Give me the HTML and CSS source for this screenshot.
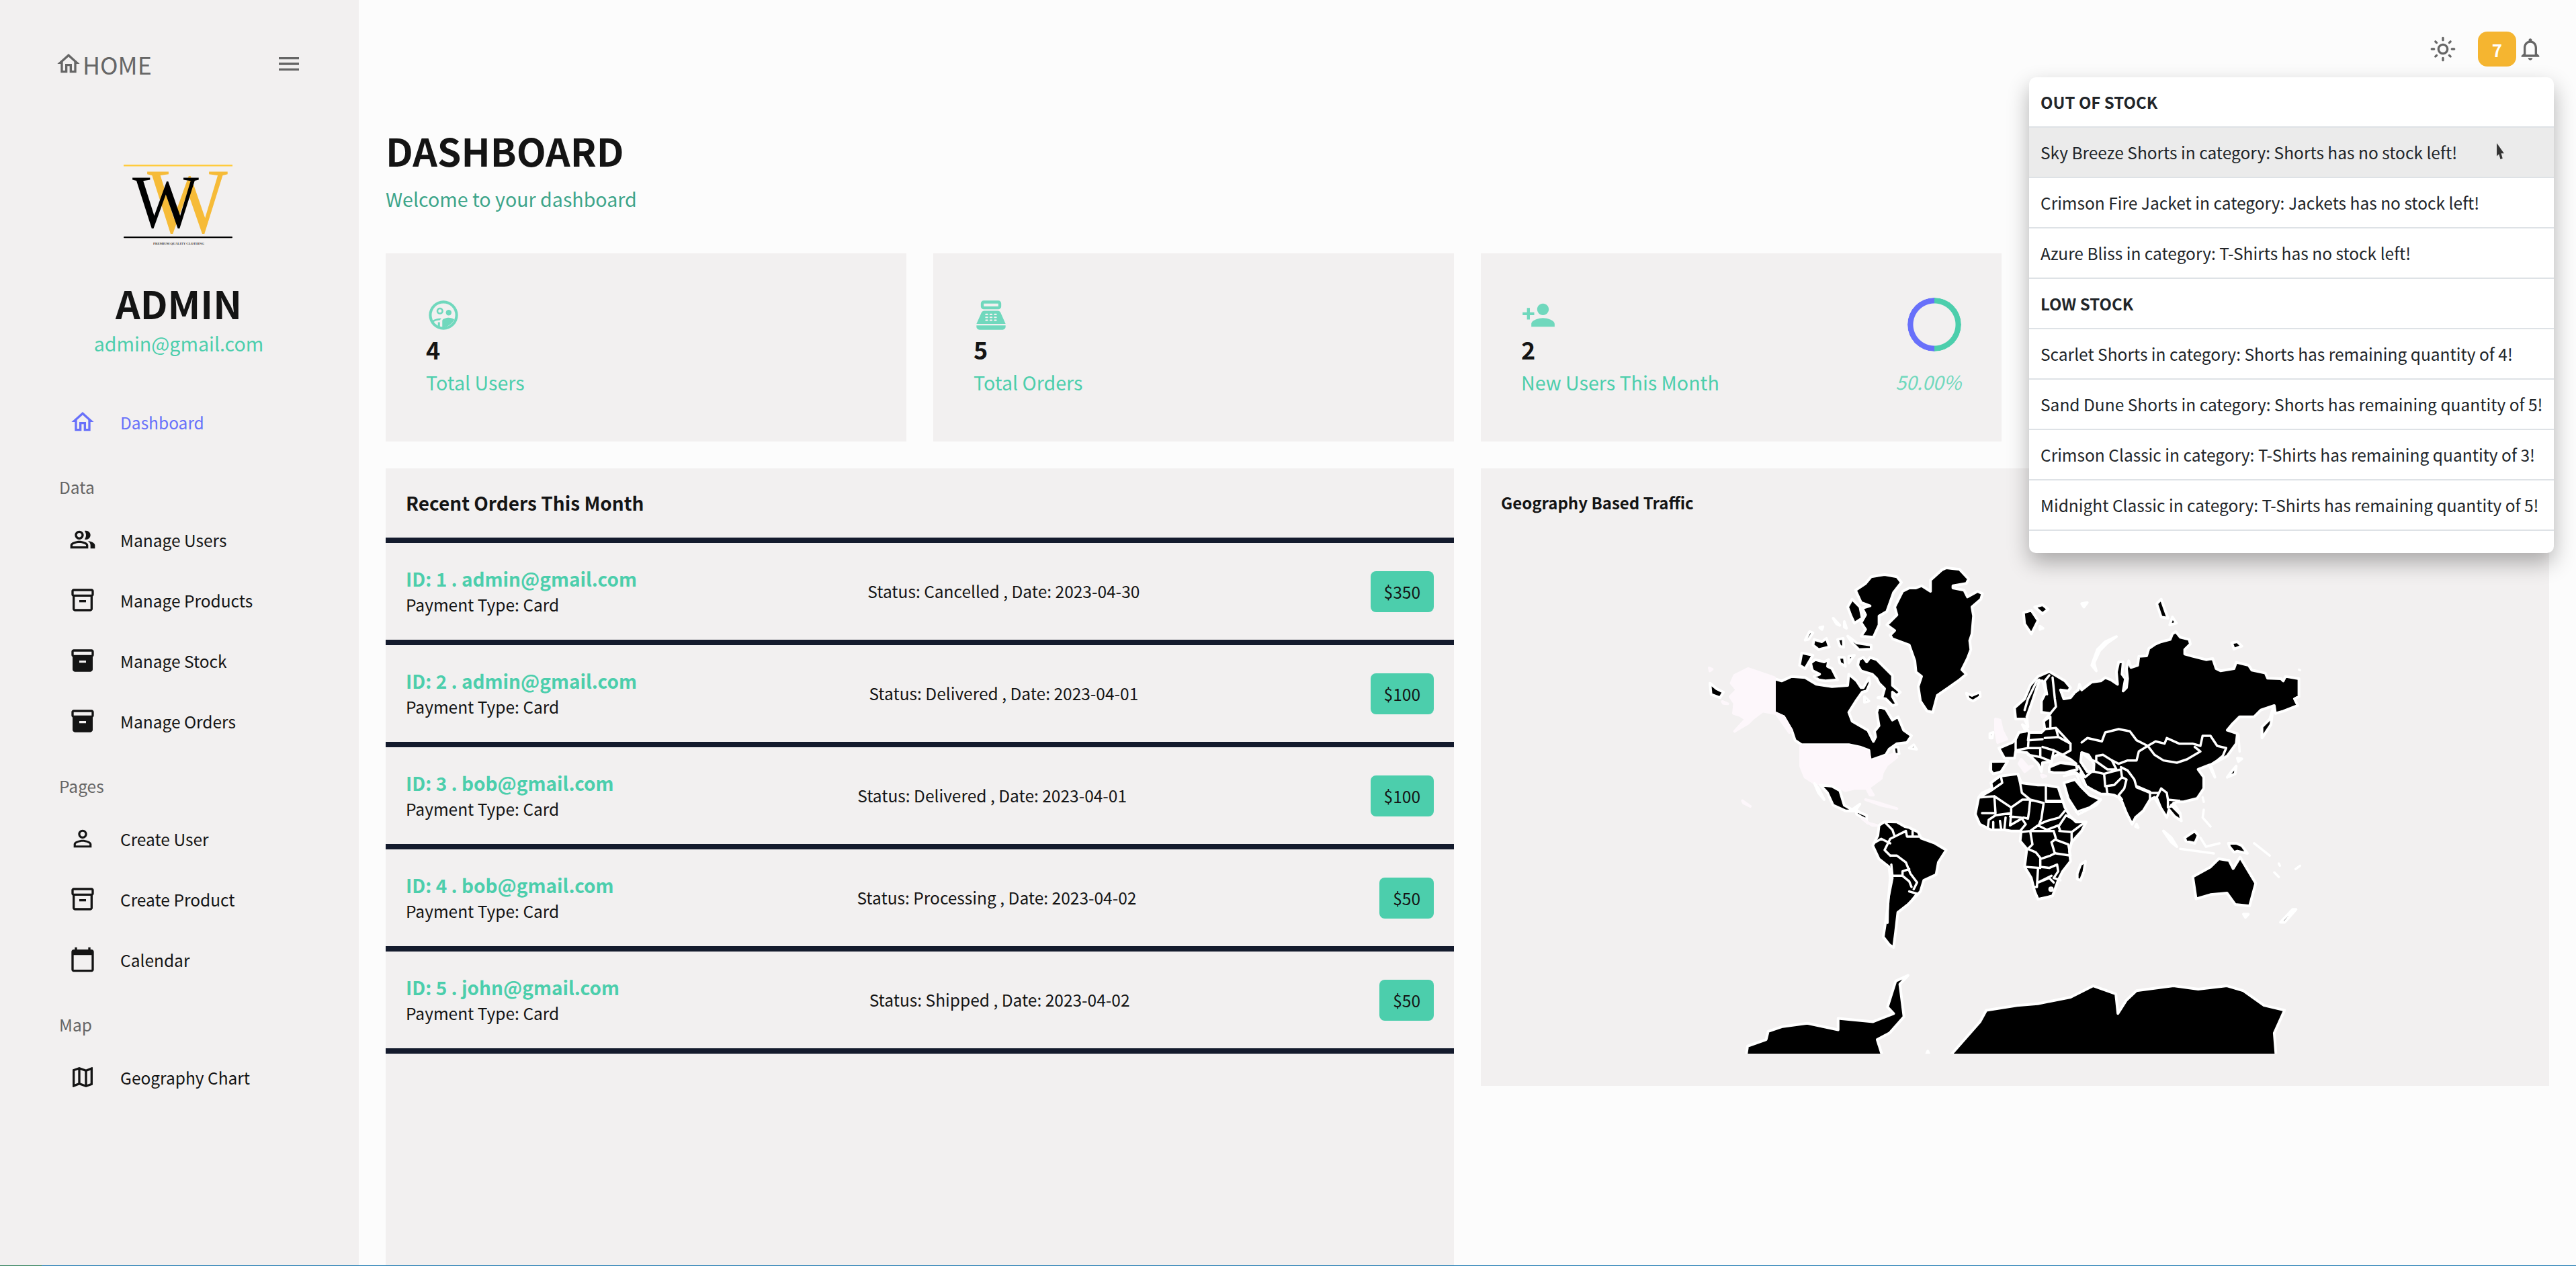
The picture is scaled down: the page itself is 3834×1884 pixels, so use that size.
FILE: index.html
```html
<!DOCTYPE html>
<html lang="en">
<head>
<meta charset="utf-8">
<title>Dashboard</title>
<link rel="stylesheet" href="styles.css">
</head>
<body>
<div class="app">
  <aside class="sidebar">
    <div class="brand">
      <div class="brand-name">
        <svg class="ico" viewBox="0 0 24 24"><path d="M12 5.69l5 4.5V18h-2v-6H9v6H7v-7.81l5-4.5M12 3L2 12h3v8h6v-6h2v6h6v-8h3L12 3z"/></svg>
        <span>HOME</span>
      </div>
      <svg class="ico" viewBox="0 0 24 24"><path d="M3 18h18v-2H3v2zm0-5h18v-2H3v2zm0-7v2h18V6H3z"/></svg>
    </div>
    <svg class="logo" viewBox="180 240 174 130">
      <rect x="186" y="245" width="162" height="2.5" fill="#ffcb3d"/>
      <text class="logo-w" x="221" y="346" font-size="138" textLength="120" lengthAdjust="spacingAndGlyphs" fill="#f6bb38">W</text>
      <text class="logo-w" x="199" y="338" font-size="113" textLength="99" lengthAdjust="spacingAndGlyphs" fill="#000">W</text>
      <rect x="186" y="352" width="162" height="2.2" rx="1" fill="#000"/>
      <text class="logo-cap" x="230" y="364" textLength="76" lengthAdjust="spacingAndGlyphs">PREMIUM QUALITY CLOTHING</text>
    </svg>
    <h2 class="admin-name">ADMIN</h2>
    <p class="admin-mail">admin@gmail.com</p>
    <nav class="menu">
      <a class="item active"><svg class="ico" viewBox="0 0 24 24"><path d="M12 5.69l5 4.5V18h-2v-6H9v6H7v-7.81l5-4.5M12 3L2 12h3v8h6v-6h2v6h6v-8h3L12 3z"/></svg><span>Dashboard</span></a>
      <p class="group">Data</p>
      <a class="item"><svg class="ico" viewBox="0 0 24 24"><path d="M16.67 13.13C18.04 14.06 19 15.32 19 17v3h4v-3c0-2.18-3.57-3.47-6.33-3.87z"/><path d="M15 12c2.21 0 4-1.79 4-4s-1.79-4-4-4c-.47 0-.91.1-1.33.24C14.5 5.27 15 6.58 15 8s-.5 2.73-1.33 3.76c.42.14.86.24 1.33.24z"/><path d="M9 12c2.21 0 4-1.79 4-4s-1.79-4-4-4-4 1.79-4 4 1.79 4 4 4zm0-6c1.1 0 2 .9 2 2s-.9 2-2 2-2-.9-2-2 .9-2 2-2z"/><path d="M9 13c-2.67 0-8 1.34-8 4v3h16v-3c0-2.66-5.33-4-8-4zm6 5H3v-.99C3.2 16.29 6.3 15 9 15s5.8 1.29 6 2v1z"/></svg><span>Manage Users</span></a>
      <a class="item"><svg class="ico" viewBox="0 0 24 24"><path d="M20 2H4c-1 0-2 .9-2 2v3.01c0 .72.43 1.34 1 1.69V20c0 1.1 1.1 2 2 2h14c.9 0 2-.9 2-2V8.7c.57-.35 1-.97 1-1.69V4c0-1.1-1-2-2-2zm-1 18H5V9h14v11zm1-13H4V4h16v3z"/><path d="M9 12h6v2H9z"/></svg><span>Manage Products</span></a>
      <a class="item"><svg class="ico" viewBox="0 0 24 24"><path d="M20 2H4c-1 0-2 .9-2 2v3.01c0 .72.43 1.34 1 1.69V20c0 1.1 1.1 2 2 2h14c.9 0 2-.9 2-2V8.7c.57-.35 1-.97 1-1.69V4c0-1.1-1-2-2-2zm-5 12H9v-2h6v2zm5-7H4V4h16v3z"/></svg><span>Manage Stock</span></a>
      <a class="item"><svg class="ico" viewBox="0 0 24 24"><path d="M20 2H4c-1 0-2 .9-2 2v3.01c0 .72.43 1.34 1 1.69V20c0 1.1 1.1 2 2 2h14c.9 0 2-.9 2-2V8.7c.57-.35 1-.97 1-1.69V4c0-1.1-1-2-2-2zm-5 12H9v-2h6v2zm5-7H4V4h16v3z"/></svg><span>Manage Orders</span></a>
      <p class="group">Pages</p>
      <a class="item"><svg class="ico" viewBox="0 0 24 24"><path d="M12 5.9c1.16 0 2.1.94 2.1 2.1s-.94 2.1-2.1 2.1S9.9 9.16 9.9 8s.94-2.1 2.1-2.1m0 9c2.97 0 6.1 1.46 6.1 2.1v1.1H5.9V17c0-.64 3.13-2.1 6.1-2.1M12 4C9.79 4 8 5.79 8 8s1.79 4 4 4 4-1.79 4-4-1.79-4-4-4zm0 9c-2.67 0-8 1.34-8 4v3h16v-3c0-2.66-5.33-4-8-4z"/></svg><span>Create User</span></a>
      <a class="item"><svg class="ico" viewBox="0 0 24 24"><path d="M20 2H4c-1 0-2 .9-2 2v3.01c0 .72.43 1.34 1 1.69V20c0 1.1 1.1 2 2 2h14c.9 0 2-.9 2-2V8.7c.57-.35 1-.97 1-1.69V4c0-1.1-1-2-2-2zm-1 18H5V9h14v11zm1-13H4V4h16v3z"/><path d="M9 12h6v2H9z"/></svg><span>Create Product</span></a>
      <a class="item"><svg class="ico" viewBox="0 0 24 24"><path d="M20 3h-1V1h-2v2H7V1H5v2H4c-1.1 0-2 .9-2 2v16c0 1.1.9 2 2 2h16c1.1 0 2-.9 2-2V5c0-1.1-.9-2-2-2zm0 18H4V8h16v13z"/></svg><span>Calendar</span></a>
      <p class="group">Map</p>
      <a class="item"><svg class="ico" viewBox="0 0 24 24"><path d="m20.5 3-.16.03L15 5.1 9 3 3.36 4.9c-.21.07-.36.25-.36.48V20.5c0 .28.22.5.5.5l.16-.03L9 18.9l6 2.1 5.64-1.9c.21-.07.36-.25.36-.48V3.5c0-.28-.22-.5-.5-.5zM10 5.47l4 1.4v11.66l-4-1.4V5.47zm-5 .99 3-1.01v11.7l-3 1.16V6.46zm14 11.08-3 1.01V6.86l3-1.16v11.84z"/></svg><span>Geography Chart</span></a>
    </nav>
  </aside>

  <main class="main">
    <header class="topbar">
      <svg class="ico ico-grey sun" viewBox="0 0 24 24"><path d="M12 9c1.65 0 3 1.35 3 3s-1.35 3-3 3-3-1.35-3-3 1.35-3 3-3m0-2c-2.76 0-5 2.24-5 5s2.24 5 5 5 5-2.24 5-5-2.24-5-5-5zM2 13h2c.55 0 1-.45 1-1s-.45-1-1-1H2c-.55 0-1 .45-1 1s.45 1 1 1zm18 0h2c.55 0 1-.45 1-1s-.45-1-1-1h-2c-.55 0-1 .45-1 1s.45 1 1 1zM11 2v2c0 .55.45 1 1 1s1-.45 1-1V2c0-.55-.45-1-1-1s-1 .45-1 1zm0 18v2c0 .55.45 1 1 1s1-.45 1-1v-2c0-.55-.45-1-1-1s-1 .45-1 1zM5.99 4.58a.996.996 0 0 0-1.41 0 .996.996 0 0 0 0 1.41l1.06 1.06c.39.39 1.03.39 1.41 0s.39-1.03 0-1.41L5.99 4.58zm12.37 12.37a.996.996 0 0 0-1.41 0 .996.996 0 0 0 0 1.41l1.06 1.06c.39.39 1.03.39 1.41 0a.996.996 0 0 0 0-1.41l-1.06-1.06zm1.06-10.96a.996.996 0 0 0 0-1.41.996.996 0 0 0-1.41 0l-1.06 1.06c-.39.39-.39 1.03 0 1.41s1.03.39 1.41 0l1.06-1.06zM7.05 18.36a.996.996 0 0 0 0-1.41.996.996 0 0 0-1.41 0l-1.06 1.06c-.39.39-.39 1.03 0 1.41s1.03.39 1.41 0l1.06-1.06z"/></svg>
      <span class="badge">7</span>
      <svg class="ico ico-grey" viewBox="0 0 24 24"><path d="M12 22c1.1 0 2-.9 2-2h-4c0 1.1.9 2 2 2zm6-6v-5c0-3.07-1.63-5.64-4.5-6.32V4c0-.83-.67-1.5-1.5-1.5s-1.5.67-1.5 1.5v.68C7.64 5.36 6 7.92 6 11v5l-2 2v1h16v-1l-2-2zm-2 1H8v-6c0-2.48 1.51-4.5 4-4.5s4 2.02 4 4.5v6z"/></svg>
    </header>

    <h1 class="page-title">DASHBOARD</h1>
    <p class="page-sub">Welcome to your dashboard</p>

    <section class="grid">
      <article class="stat">
        <div>
          <svg class="stat-ico" viewBox="0 0 24 24"><path fill-rule="evenodd" d="M12 2a10 10 0 1 0 0 20 10 10 0 0 0 0-20zm0 1.9a8.1 8.1 0 1 1 0 16.2 8.1 8.1 0 0 1 0-16.2z"/><path fill-rule="evenodd" d="M9.6 6.76a2.36 2.36 0 1 0 0 4.72 2.36 2.36 0 0 0 0-4.72zm0 1.2a1.16 1.16 0 1 1 0 2.32 1.16 1.16 0 0 1 0-2.32z"/><circle cx="15.6" cy="10.27" r="1.93"/><path d="M11.2 20.4v-4.5c0-1.42 2.94-2.13 4.4-2.13 1.07 0 2.92.39 3.84 1.15-1.17 2.97-4.7 5.6-8.24 5.48z"/><path d="M9.6 14.2c-1.47 0-4.09.57-5.14 1.69l.7 1c.7-.8 2.9-1.4 4.44-1.4.2-.5.6-.9 1-1.1-.4-.1-.7-.19-1-.19zM8.2 16.8v3.3l1.4.5v-3.8z"/></svg>
          <p class="stat-num">4</p>
          <p class="stat-label">Total Users</p>
        </div>
      </article>
      <article class="stat">
        <div>
          <svg class="stat-ico" viewBox="0 0 24 24"><path d="M17 2H7c-1.1 0-2 .9-2 2v2c0 1.1.9 2 2 2h10c1.1 0 2-.9 2-2V4c0-1.1-.9-2-2-2zm0 4H7V4h10v2zm3 16H4c-1.1 0-2-.9-2-2v-1h20v1c0 1.1-.9 2-2 2zm-1.47-11.81C18.21 9.47 17.49 9 16.7 9H7.3c-.79 0-1.51.47-1.83 1.19L2 18h20l-3.47-7.81zM9.5 16h-1c-.28 0-.5-.22-.5-.5s.22-.5.5-.5h1c.28 0 .5.22.5.5s-.22.5-.5.5zm0-2h-1c-.28 0-.5-.22-.5-.5s.22-.5.5-.5h1c.28 0 .5.22.5.5s-.22.5-.5.5zm0-2h-1c-.28 0-.5-.22-.5-.5s.22-.5.5-.5h1c.28 0 .5.22.5.5s-.22.5-.5.5zm3 4h-1c-.28 0-.5-.22-.5-.5s.22-.5.5-.5h1c.28 0 .5.22.5.5s-.22.5-.5.5zm0-2h-1c-.28 0-.5-.22-.5-.5s.22-.5.5-.5h1c.28 0 .5.22.5.5s-.22.5-.5.5zm0-2h-1c-.28 0-.5-.22-.5-.5s.22-.5.5-.5h1c.28 0 .5.22.5.5s-.22.5-.5.5zm3 4h-1c-.28 0-.5-.22-.5-.5s.22-.5.5-.5h1c.28 0 .5.22.5.5s-.22.5-.5.5zm0-2h-1c-.28 0-.5-.22-.5-.5s.22-.5.5-.5h1c.28 0 .5.22.5.5s-.22.5-.5.5zm0-2h-1c-.28 0-.5-.22-.5-.5s.22-.5.5-.5h1c.28 0 .5.22.5.5s-.22.5-.5.5z"/></svg>
          <p class="stat-num">5</p>
          <p class="stat-label">Total Orders</p>
        </div>
      </article>
      <article class="stat">
        <div>
          <svg class="stat-ico" viewBox="0 0 24 24"><path d="M15 12c2.21 0 4-1.79 4-4s-1.79-4-4-4-4 1.79-4 4 1.79 4 4 4zm-9-2V7H4v3H1v2h3v3h2v-3h3v-2H6zm9 4c-2.67 0-8 1.34-8 4v2h16v-2c0-2.66-5.33-4-8-4z"/></svg>
          <p class="stat-num">2</p>
          <p class="stat-label">New Users This Month</p>
        </div>
        <div class="stat-side">
          <div class="ring"></div>
          <p class="stat-pct">50.00%</p>
        </div>
      </article>
      <div class="stat-spacer"></div>

      <section class="orders">
        <h3 class="orders-title">Recent Orders This Month</h3>
        <div class="order">
          <div><p class="order-id">ID: 1 . admin@gmail.com</p><p class="order-text">Payment Type: Card</p></div>
          <p class="order-text">Status: Cancelled , Date: 2023-04-30</p>
          <span class="pill">$350</span>
        </div>
        <div class="order">
          <div><p class="order-id">ID: 2 . admin@gmail.com</p><p class="order-text">Payment Type: Card</p></div>
          <p class="order-text">Status: Delivered , Date: 2023-04-01</p>
          <span class="pill">$100</span>
        </div>
        <div class="order">
          <div><p class="order-id">ID: 3 . bob@gmail.com</p><p class="order-text">Payment Type: Card</p></div>
          <p class="order-text">Status: Delivered , Date: 2023-04-01</p>
          <span class="pill">$100</span>
        </div>
        <div class="order">
          <div><p class="order-id">ID: 4 . bob@gmail.com</p><p class="order-text">Payment Type: Card</p></div>
          <p class="order-text">Status: Processing , Date: 2023-04-02</p>
          <span class="pill">$50</span>
        </div>
        <div class="order">
          <div><p class="order-id">ID: 5 . john@gmail.com</p><p class="order-text">Payment Type: Card</p></div>
          <p class="order-text">Status: Shipped , Date: 2023-04-02</p>
          <span class="pill">$50</span>
        </div>
      </section>

      <section class="geo">
        <h3 class="geo-title">Geography Based Traffic</h3>
        <svg class="map" viewBox="2204 840 1590 728">
          <g transform="translate(2530 840) scale(.3333)">
            <path class="land" d="M1030 70L1080 25L1100 15L1160 22L1200 65L1190 85L1130 95L1130 105L1180 115L1195 145L1240 120L1262 130L1255 155L1215 190L1222 230L1215 310L1205 340L1210 380L1195 420L1170 470L1190 490L1160 515L1110 550L1060 585L1040 660L1015 655L985 610L975 545L990 500L965 480L960 430L935 360L860 332L850 315L870 295L835 270L880 225L870 190L905 120L935 105L965 105L990 95L1030 120Z"/>
            <path class="land" d="M695 115L740 85L765 55L825 45L880 55L900 80L865 125L835 210L800 230L800 270L775 325L720 320L740 290L720 260L740 225L725 195L760 185L720 170Z"/>
            <path class="land" d="M660 190L680 155L715 190L725 240L690 262L675 230Z"/>
            <path class="land" d="M595 240L625 272L610 265Z M470 338L490 300L505 305L485 335Z M510 335L545 345L565 330L578 368L530 380L505 360Z M615 335L640 330L642 370L625 365Z M660 320L700 350L765 360L765 378L710 380L680 350Z M645 255L655 285L645 280Z M535 282L550 278L545 290Z"/>
            <path class="land" d="M455 395L505 405L470 465L445 450Z M495 440L515 425L555 435L575 425L570 455L590 465L615 515L560 520L530 515L510 500L535 490L505 475L500 465Z M620 415L645 415L650 455L625 440Z M665 410L690 405L665 440Z"/>
            <path class="land" d="M710 425L730 415L745 435L760 415L790 425L830 465L860 495L860 540L895 570L880 585L860 570L860 590L880 625L860 630L830 600L795 595L815 590L825 555L800 530L790 510L770 490L720 475L705 450Z"/>
            <path class="land" d="M333 510L365 520L410 500L470 505L520 535L590 545L660 540L665 490L700 520L720 550L730 550L755 505L760 530L745 565L725 570L700 605L665 660L680 700L750 740L775 790L785 770L780 745L800 720L790 660L798 635L830 645L860 695L885 680L910 740L945 765L925 795L880 800L845 825L830 850L760 875L755 830L715 815L665 805L455 805L425 785L410 740L375 680L333 660Z"/>
            <path class="land" d="M935 820L955 805L968 825Z M865 815L885 815L890 845L870 850Z M735 590L755 610L735 615Z"/>
            <path class="us" d="M450 812L665 812L715 820L750 835L765 880L840 855L870 845L880 860L835 895L815 930L810 955L770 985L755 995L775 1030L760 1030L745 1000L690 1000L650 1010L640 1005L600 985L590 990L510 975L470 950L450 900Z"/>
            <path class="us" d="M155 495L215 465L333 505L333 665L280 655L240 685L215 710L155 745L205 690L180 675L150 665L155 620L135 590L165 560L140 530Z M340 665L375 680L410 740L400 750Z M190 1055L225 1080L195 1065Z M42 462L55 468L45 475Z"/>
            <path class="land" d="M45 530L75 555L105 570L90 595L50 580Z"/>
            <path class="us" d="M740 1050L800 1065L880 1090L810 1075Z M100 612L125 622L105 620Z"/>
            <path class="land" d="M538 985L590 990L625 1010L645 1075L680 1095L715 1070L700 1090L690 1100L650 1100L595 1075L570 1020Z M512 978L530 1000L555 1050L530 1020Z M695 1095L720 1110L745 1120L745 1140L725 1130L700 1115Z"/>
            <path class="us" d="M725 1135L770 1165L790 1165L750 1155Z"/>
            <path class="land" d="M1190 575L1215 585L1250 570L1252 590L1220 610L1200 600Z"/>
            <path class="land" d="M800 1165L825 1148L880 1150L915 1170L935 1175L975 1195L988 1222L1050 1245L1100 1275L1065 1330L1055 1385L1000 1410L985 1460L930 1518L884 1554L874 1641L865 1710L847 1699L819 1663L838 1539L850 1400L845 1350L800 1315L772 1255L795 1210Z"/>
            <path class="border" d="M825 1150L860 1185L870 1215L850 1225L825 1275L850 1300M870 1215L920 1190L925 1215L985 1215M775 1245L810 1225L850 1245M850 1300L880 1300L920 1330L940 1380L970 1420L955 1450M855 1340L860 1390L905 1390L935 1415L945 1440M905 1390L905 1370L935 1360M850 1360L860 1400L840 1500L838 1600M935 1460L970 1470L950 1495M950 1190L950 1210"/>
          </g>
          <g transform="translate(2950 840) scale(.3333)">
            <path class="land" d="M145 640L190 600L215 540L250 500L300 478L320 490L370 520L395 550L385 565L350 560L365 600L395 595L415 570L430 560L435 535L445 560L490 525L530 520L550 505L575 515L605 535L600 480L610 435L630 435L625 490L640 510L630 565L645 550L650 510L645 465L655 430L665 460L695 450L700 410L735 408L745 375L775 355L800 345L840 335L850 310L865 300L885 325L925 335L930 355L905 380L905 400L940 410L1000 425L1030 420L1045 465L1065 475L1125 465L1135 437L1190 450L1205 472L1265 485L1275 508L1335 510L1345 520L1355 500L1415 510L1415 590L1395 600L1410 630L1345 655L1310 665L1305 630L1245 650L1215 680L1150 680L1120 710L1095 740L1140 755L1135 800L1095 855L1050 880L1020 895L1040 950L1025 920L1015 895L965 915L990 950L990 1000L960 1045L900 1060L870 1060L845 1075L885 1115L890 1145L860 1125L835 1095L825 1130L800 1090L770 1040L750 1050L720 1100L685 1130L670 1160L645 1110L625 1060L610 1040L590 1030L560 1025L530 1025L500 1010L465 990L440 945L420 930L370 930L300 925L310 880L270 885L265 925L250 890L200 840L150 835L145 865L100 865L75 820L135 795L150 780L165 750L195 745L180 715L195 725L210 750L265 750L280 735L275 700L305 665L265 660L265 610L285 570L270 520L255 520L225 610L200 680L205 725L190 690L150 690Z"/>
            <path class="sea" d="M315 860L345 845L395 870L420 890L350 885L305 900Z M445 840L475 850L500 890L498 925L470 925L440 880Z"/>
            <path class="land" d="M300 905L350 885L420 895L425 915L370 930L320 930L300 925Z"/>
            <path class="land" d="M365 975L415 960L440 990L480 1030L530 1050L510 1075L430 1115L420 1100L385 1045Z"/>
            <path class="land" d="M40 880L115 878L85 925L50 935L35 915Z M35 755L50 750L45 775L35 775Z"/>
            <path class="us" d="M60 690L80 695L90 740L110 780L70 795L60 740Z M175 870L205 905L225 900L190 925L165 890Z M265 940L285 945L270 950Z"/>
            <path class="land" d="M-15 1040L0 1020L45 1000L40 975L80 945L160 935L175 975L250 985L285 985L340 995L370 1085L390 1120L420 1150L465 1150L445 1190L400 1240L390 1280L395 1325L360 1370L340 1410L315 1480L250 1495L235 1460L220 1400L190 1350L200 1270L170 1235L175 1190L130 1190L100 1185L40 1185L-10 1160L-30 1115Z"/>
            <path class="land" d="M440 1340L462 1325L455 1370L440 1410L425 1405L425 1380Z"/>
            <path class="land" d="M185 215L220 205L250 250L220 310L190 265Z M235 190L270 180L295 200L270 220Z M258 275L272 285L258 290Z M445 175L470 170L455 190Z"/>
            <path class="land" d="M600 322L550 345L515 380L490 450L510 475L500 440L525 385L560 350Z M780 175L800 155L830 240L800 235Z M850 235L868 262L838 270Z M1115 350L1140 345L1160 365L1125 378Z"/>
            <path class="land" d="M1300 640L1285 690L1250 725L1250 775L1290 715Z M1140 865L1160 868L1145 880Z M1135 900L1130 935L1095 950L1110 930Z M690 1160L697 1175L685 1170Z"/>
            <path class="land" d="M810 1190L845 1220L870 1260L845 1240Z M905 1220L950 1190L965 1210L950 1245L910 1235Z M1100 1245L1135 1245L1160 1255L1185 1290L1140 1280L1125 1285L1105 1260Z"/>
            <path class="border" d="M1145 760L1150 835M885 1270L1035 1290M985 1040L990 1060M990 1095L985 1130L1020 1170M975 1220L1000 1260L1060 1245M1215 1245L1285 1300M1325 1335L1330 1345M1305 1375L1325 1395M1400 1360L1420 1345M1415 470L1420 472"/>
            <path class="border" d="M-15 1040L40 1010L90 975L85 950M160 935L170 975L178 1020L215 1050M-15 1040L55 1035L60 1110L0 1110M55 1035L130 1085L180 1050L215 1050L275 1065M130 1085L130 1110L60 1120L30 1140M285 985L285 1055L350 1055M215 1050L210 1100L205 1135M275 1065L265 1135L255 1160M285 1060L360 1060M255 1160L290 1145L345 1130L370 1100M130 1110L125 1165L185 1130L205 1135M125 1125L175 1130L195 1160L170 1190M30 1140L25 1180M50 1150L50 1185M80 1145L85 1180M105 1130L100 1180M215 1190L250 1165L290 1185L340 1165L350 1190M345 1165L375 1120L430 1150L465 1150L440 1165L400 1195L345 1190M175 1195L215 1190L230 1190L320 1190L330 1225L310 1240L325 1290L305 1300L260 1315M215 1190L225 1250L205 1270L240 1285L260 1310L260 1350L300 1355M330 1230L385 1250L395 1300L330 1290M400 1195L400 1240M190 1350L260 1355M250 1355L245 1440L235 1440M250 1420L300 1400L320 1420M300 1355L335 1340L340 1370L320 1400L350 1410M250 1420L310 1390"/>
            <circle class="dot" cx="308" cy="1450" r="9"/>
            <path class="border" d="M445 795L470 775L535 790L550 750L610 735L660 745L690 785L740 810L775 790L815 800L825 775L880 800L940 800L975 810L985 765L1020 765L1050 810L1090 820L1075 855L1050 875L1020 895M740 810L770 850L810 875L870 885L915 870L975 835L950 815M740 810L700 835L690 875L650 875L610 890L580 875L540 850L510 855L510 880L480 870L445 840M510 880L560 915L600 915L580 875M500 925L545 935L580 925L620 915M545 935L550 990L590 985L625 950L620 915M560 1025L555 990M625 950L645 960L635 1000L610 1030L625 1050M620 905L650 920L680 960L690 995L750 1020L790 1020L800 1000L825 1020L830 1050L880 1055M690 990L750 1015M750 1020L750 1050L780 1040M795 1010L780 1040L800 1090M830 1050L830 1085L860 1075L880 1110M880 1055L855 1065L885 1110M430 900L460 950L490 925M440 930L465 990M365 945L420 930L440 985M530 1050L480 1085L420 1105"/>
            <path class="border" d="M315 505L325 600L330 635L305 665M255 515L245 520L205 600L190 650M300 495L280 520L290 580M275 700L305 680L305 730M280 735L330 730L340 770L280 775M280 775L340 770L395 800L395 830L360 850L320 830L270 815M210 750L205 785L270 780M150 780L150 830L205 820L210 750M320 830L310 880L260 860L260 820M205 820L260 820M205 850L260 860M40 890L40 925M395 800L330 730"/>
          </g>
          <g transform="translate(2500 820) scale(.6124 .4847)">
            <path class="land" d="M1247 1000L1290 970L1310 945L1335 950L1345 975L1362 940L1400 1020L1385 1090L1350 1085L1330 1050L1290 1055L1255 1068Z M1370 1115L1382 1115L1375 1125Z M1460 1140L1490 1100L1498 1100L1470 1140Z"/>
            <path class="land" d="M650 1560L730 1445L745 1410L820 1395L870 1390L950 1370L1005 1335L1060 1360L1065 1420L1085 1380L1110 1350L1200 1335L1260 1345L1330 1335L1370 1350L1420 1395L1470 1410L1445 1480L1450 1560Z"/>
            <path class="land" d="M160 1560L165 1520L210 1500L215 1475L250 1460L310 1450L385 1470L385 1435L470 1445L520 1420L505 1400L525 1320L555 1303L535 1330L545 1430L510 1480L480 1500L495 1560Z M595 1560L603 1535L610 1560Z"/>
          </g>
        </svg>
      </section>
    </section>
  </main>
</div>

<aside class="stock-menu">
  <p class="stock-head">OUT OF STOCK</p>
  <p class="stock-row hovered">Sky Breeze Shorts in category: Shorts has no stock left!<svg class="cursor" viewBox="0 0 12 22"><path d="M1 0L11 14L7 14L9 21L6 22L4 15L1 18Z"/></svg></p>
  <p class="stock-row">Crimson Fire Jacket in category: Jackets has no stock left!</p>
  <p class="stock-row">Azure Bliss in category: T-Shirts has no stock left!</p>
  <p class="stock-head">LOW STOCK</p>
  <p class="stock-row">Scarlet Shorts in category: Shorts has remaining quantity of 4!</p>
  <p class="stock-row">Sand Dune Shorts in category: Shorts has remaining quantity of 5!</p>
  <p class="stock-row">Crimson Classic in category: T-Shirts has remaining quantity of 3!</p>
  <p class="stock-row">Midnight Classic in category: T-Shirts has remaining quantity of 5!</p>
</aside>
<div class="edge-line"></div>
</body>
</html>
```

FILE: styles.css
```css
* { box-sizing: border-box; }
html, body { margin: 0; padding: 0; height: 100%; }
body {
  position: relative;
  overflow: hidden;
  background: #fcfcfc;
  color: #141414;
  font-family: "Noto Sans CJK JP", "Noto Sans", sans-serif;
  font-size: 24.5px;
}
p, h1, h2, h3 { margin: 0; font-weight: 400; }
.app { display: flex; height: 1884px; }
.ico { width: 40px; height: 40px; fill: currentColor; flex: none; display: block; }
.ico-grey { color: #666; }

.sidebar { width: 534px; flex: none; background: #f2f0f0; }
.brand {
  display: flex; align-items: center; justify-content: space-between;
  padding: 75px 84px 0 82px; color: #666;
}
.brand-name { display: flex; align-items: center; gap: 1px; font-size: 35.8px; line-height: 40px; }
.logo { display: block; width: 174px; height: 130px; margin: 125px 0 0 178px; overflow: visible; }
.logo-w { font-family: "Liberation Serif", serif; }
.logo-cap { font-family: "Liberation Serif", serif; font-size: 5px; font-weight: 700; fill: #333; }
.admin-name { margin-top: 44px; text-align: center; font-size: 57.2px; line-height: 72px; font-weight: 700; padding-right: 2px; }
.admin-mail { margin-top: 2px; text-align: center; font-size: 28.6px; line-height: 46px; color: #4cceac; padding-right: 2px; }
.menu { margin-top: 49px; }
.item { display: flex; align-items: center; height: 90px; padding-left: 103px; gap: 36px; }
.item.active { color: #6870fa; }
.group { padding-left: 88px; margin: 29px 0 10px; line-height: 46px; color: #666; }

.main { flex: 1; padding: 0 40px; min-width: 0; }
.topbar { display: flex; align-items: center; justify-content: flex-end; padding: 47px 8px 0 0; height: 99px; }
.sun { margin-right: 32px; }
.badge {
  width: 57px; height: 52px; border-radius: 14px; margin-right: 1px;
  background: #f5b530; color: #fff; font-weight: 700; font-size: 26px;
  display: flex; align-items: center; justify-content: center;
}
.page-title { margin-top: 86px; font-size: 57.2px; line-height: 76px; font-weight: 700; }
.page-sub { margin-top: 15px; font-size: 28.6px; line-height: 40px; color: #3da58a; }

.grid {
  display: grid; grid-template-columns: repeat(4, 775px); grid-template-rows: 280px 1187px;
  gap: 40px; margin-top: 61px;
}
.stat {
  background: #f2f0f0; padding: 0 60px;
  display: flex; align-items: center; justify-content: space-between;
}
.stat-ico { display: block; width: 52px; height: 52px; fill: #70d8bd; }
.stat-num { font-size: 36px; line-height: 50px; font-weight: 700; margin-top: -1px; margin-bottom: 2px; }
.stat-label { font-size: 28.6px; line-height: 46px; color: #4cceac; }
.stat-side { display: flex; flex-direction: column; align-items: flex-end; }
.ring {
  width: 80px; height: 80px; border-radius: 50%;
  background: linear-gradient(to right, #6870fa 50%, #4cceac 50%);
  -webkit-mask: radial-gradient(circle, transparent 31px, #000 32px);
  mask: radial-gradient(circle, transparent 31px, #000 32px);
  margin-bottom: 22px;
}
.stat-pct { font-size: 28.6px; line-height: 46px; font-style: italic; color: #70d8bd; }

.orders { grid-column: span 2; background: #f2f0f0; }
.orders-title { height: 103px; padding: 0 30px; font-size: 28px; line-height: 103px; font-weight: 700; }
.order {
  border-top: 8px solid #141b2d; height: 152px; padding: 0 30px;
  display: flex; align-items: center; justify-content: space-between;
}
.order:last-child { height: 160px; border-bottom: 8px solid #141b2d; }
.order-id { font-size: 28px; line-height: 40px; font-weight: 700; color: #4cceac; }
.order-text { line-height: 38px; }
.pill { background: #4cceac; border-radius: 8px; padding: 0 20px; height: 61px; line-height: 61px; }

.geo { grid-column: span 2; background: #f2f0f0; height: 919px; }
.geo-title { height: 143px; padding: 33px 30px 0; font-size: 24px; line-height: 36px; font-weight: 700; }
.map { display: block; width: 1590px; height: 728px; }
.land { fill: #000; stroke: #fff; stroke-width: 4px; stroke-linejoin: round; vector-effect: non-scaling-stroke; }
.us { fill: #fdf7fb; stroke: #fdf7fb; stroke-width: 4px; stroke-linejoin: round; vector-effect: non-scaling-stroke; }
.sea { fill: #f2f0f0; stroke: #fff; stroke-width: 4px; stroke-linejoin: round; vector-effect: non-scaling-stroke; }
.border { fill: none; stroke: #fff; stroke-width: 3.5px; stroke-linejoin: round; stroke-linecap: round; vector-effect: non-scaling-stroke; }
.dot { fill: #f2f0f0; stroke: #fff; stroke-width: 2px; vector-effect: non-scaling-stroke; }

.stock-menu {
  position: absolute; left: 3020px; top: 115px; width: 781px; height: 708px;
  background: #fff; border-radius: 10px;
  box-shadow: 0 14px 32px rgba(0, 0, 0, .3);
}
.stock-head, .stock-row {
  height: 75px; line-height: 74px; padding: 0 17px; border-bottom: 2px solid #dee2e6; color: #212529; white-space: nowrap;
}
.stock-head { font-weight: 700; font-size: 24px; }
.stock-row { position: relative; }
.hovered { background: #ebebeb; }
.cursor { position: absolute; left: 695px; top: 23px; width: 13px; height: 24px; fill: #333; }
.edge-line {
  position: absolute; left: 0; right: 0; bottom: 0; height: 1px;
  background: linear-gradient(to right, #2a7d56 62px, #1a78b0 62px);
}
```
